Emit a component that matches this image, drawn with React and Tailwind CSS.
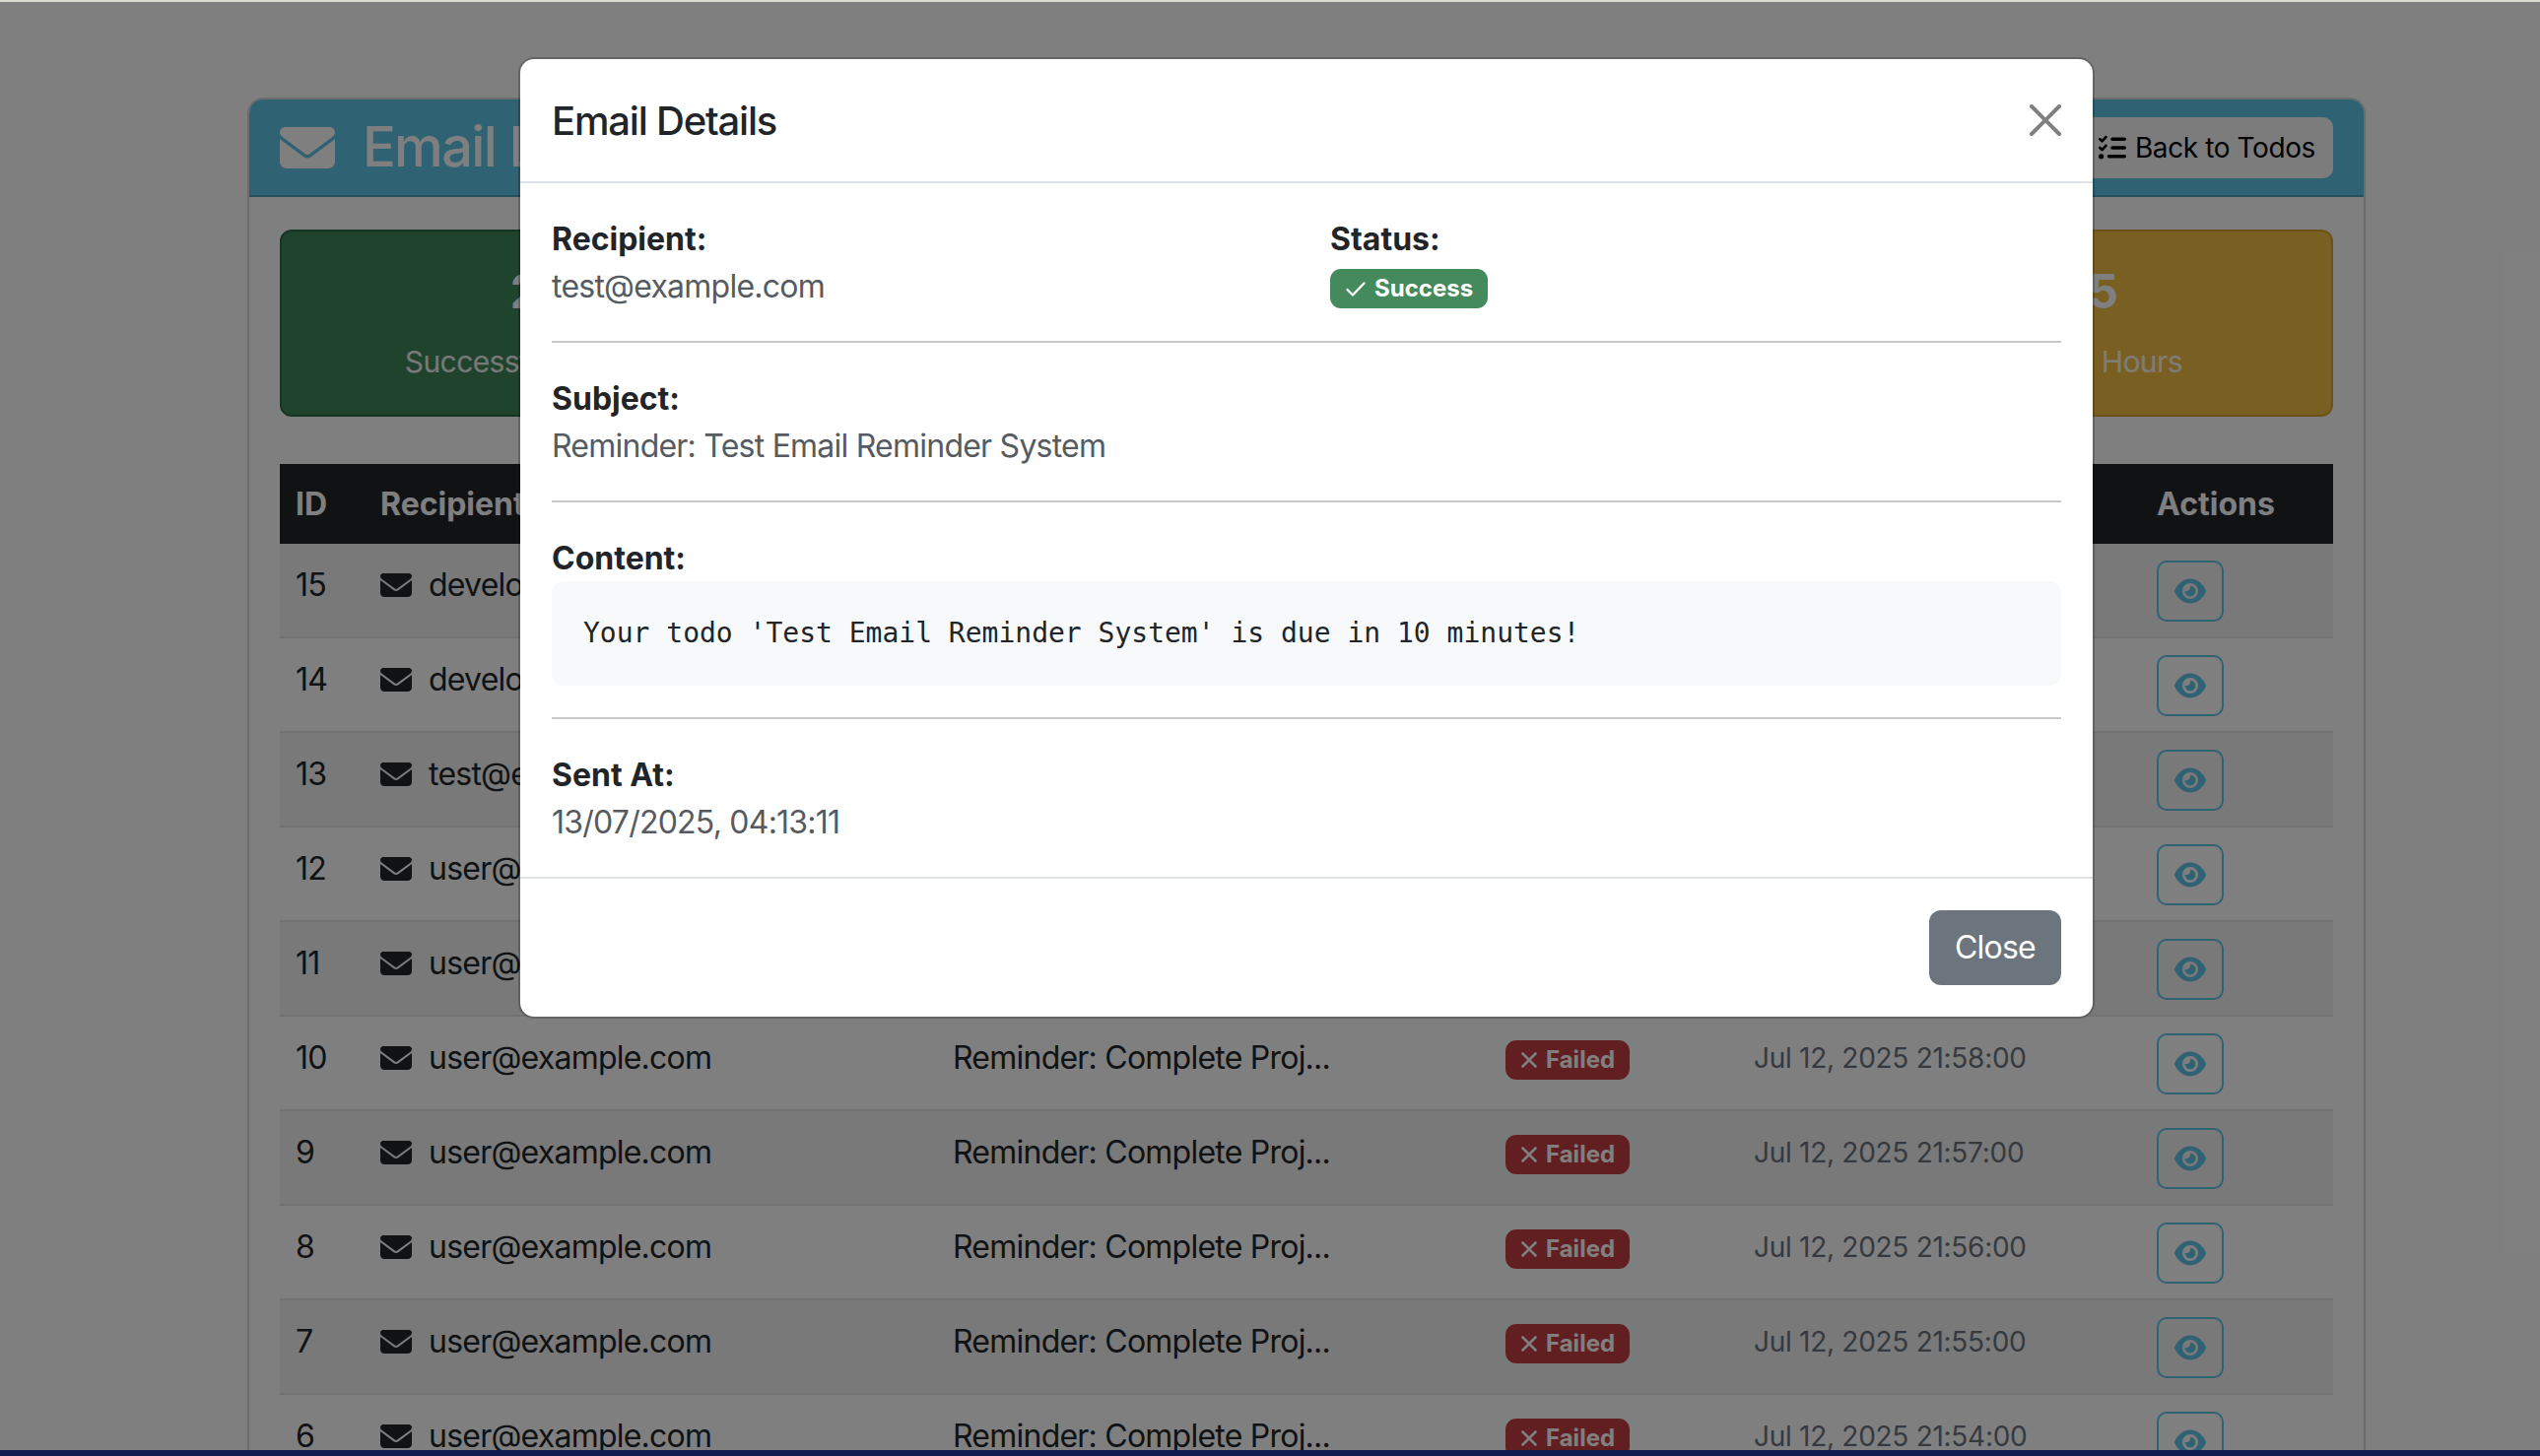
import { FaEnvelope, FaEye, FaListCheck } from "react-icons/fa6";

const rows = [
  { id: 15, to: "developer@example.com", subject: "Reminder: Complete Proj...", ok: true, at: "Jul 13, 2025 04:13:11" },
  { id: 14, to: "developer@example.com", subject: "Reminder: Complete Proj...", ok: true, at: "Jul 13, 2025 04:12:00" },
  { id: 13, to: "test@example.com", subject: "Reminder: Test Email Rem...", ok: true, at: "Jul 13, 2025 04:11:00" },
  { id: 12, to: "user@example.com", subject: "Reminder: Complete Proj...", ok: false, at: "Jul 12, 2025 22:00:00" },
  { id: 11, to: "user@example.com", subject: "Reminder: Complete Proj...", ok: false, at: "Jul 12, 2025 21:59:00" },
  { id: 10, to: "user@example.com", subject: "Reminder: Complete Proj...", ok: false, at: "Jul 12, 2025 21:58:00" },
  { id: 9, to: "user@example.com", subject: "Reminder: Complete Proj...", ok: false, at: "Jul 12, 2025 21:57:00" },
  { id: 8, to: "user@example.com", subject: "Reminder: Complete Proj...", ok: false, at: "Jul 12, 2025 21:56:00" },
  { id: 7, to: "user@example.com", subject: "Reminder: Complete Proj...", ok: false, at: "Jul 12, 2025 21:55:00" },
  { id: 6, to: "user@example.com", subject: "Reminder: Complete Proj...", ok: false, at: "Jul 12, 2025 21:54:00" },
];

const stats = [
  { n: "2", label: "Successfully Sent", color: "bg-[#40865c] border-[#2f6b48]" },
  { n: "10", label: "Failed to Send", color: "bg-[#c43e44] border-[#a83237]" },
  { n: "12", label: "Total Emails", color: "bg-[#5fc6e8] border-[#4aa8c8]" },
  { n: "15", label: "Last 24 Hours", color: "bg-[#f4be44] border-[#d9a534]" },
];

function StatusBadge({ ok }) {
  return (
    <span className={`inline-flex h-10 items-center gap-[9px] rounded-[11px] pl-[16px] pr-[15px] text-[24px] font-bold leading-none tracking-normal text-white ${ok ? "bg-[#458a5c]" : "bg-[#c43e44]"}`}>
      {ok ? (
        <svg viewBox="0 0 20 15" className="h-[15px] w-[20px]" fill="none" stroke="currentColor" strokeWidth="2.4" strokeLinecap="round" strokeLinejoin="round">
          <path d="M1.5 8 7 13.5 18.5 1.5" />
        </svg>
      ) : (
        <svg viewBox="0 0 16 16" className="h-4 w-4" fill="none" stroke="currentColor" strokeWidth="2.6" strokeLinecap="round">
          <path d="M1.5 1.5 14.5 14.5M14.5 1.5 1.5 14.5" />
        </svg>
      )}
      {ok ? "Success" : "Failed"}
    </span>
  );
}

function Detail({ label, children }) {
  return (
    <div>
      <div className="translate-y-px text-[32px] font-bold leading-[48px] tracking-normal text-[#212529]">{label}</div>
      {children}
    </div>
  );
}

function Value({ children }) {
  return <div className="translate-y-px text-[32px] leading-[48px] text-[#565b61]">{children}</div>;
}

function Rule() {
  return <hr className="my-8 border-t-2 border-[#c8c9ca]" />;
}

function EmailModal() {
  return (
    <div className="absolute inset-0 bg-black/50">
      <div className="absolute left-[526px] top-[58px] w-[1600px] rounded-[16px] border-2 border-black/20 bg-white bg-clip-padding">
        <div className="flex h-[126px] items-center justify-between border-b-2 border-[#dee2e6] px-[32px]">
          <h5 className="translate-y-px text-[40px] font-medium leading-[60px] tracking-[-0.03em] text-[#212529]">Email Details</h5>
          <svg viewBox="0 0 16 16" className="h-8 w-8 text-[#808080]" fill="currentColor">
            <path d="M.293.293a1 1 0 0 1 1.414 0L8 6.586 14.293.293a1 1 0 1 1 1.414 1.414L9.414 8l6.293 6.293a1 1 0 0 1-1.414 1.414L8 9.414l-6.293 6.293a1 1 0 0 1-1.414-1.414L6.586 8 .293 1.707a1 1 0 0 1 0-1.414z" />
          </svg>
        </div>
        <div className="p-[32px]">
          <div className="grid grid-cols-2 gap-x-[48px]">
            <Detail label="Recipient:">
              <Value>test@example.com</Value>
            </Detail>
            <Detail label="Status:">
              <div className="h-12 pt-[7px] leading-none">
                <StatusBadge ok />
              </div>
            </Detail>
          </div>
          <Rule />
          <Detail label="Subject:">
            <Value>Reminder: Test Email Reminder System</Value>
          </Detail>
          <Rule />
          <Detail label="Content:">
            <pre className="rounded-[12px] bg-[#f8f9fa] p-[32px] font-['DejaVu_Sans_Mono',monospace] text-[28px] leading-[42px] tracking-normal text-[#212529]">
              Your todo 'Test Email Reminder System' is due in 10 minutes!
            </pre>
          </Detail>
          <Rule />
          <Detail label="Sent At:">
            <Value>13/07/2025, 04:13:11</Value>
          </Detail>
        </div>
        <div className="flex justify-end border-t-2 border-[#dee2e6] p-[32px]">
          <button className="h-[76px] w-[134px] rounded-[12px] bg-[#6c757d] text-[32px] text-white">Close</button>
        </div>
      </div>
    </div>
  );
}

export default function App() {
  return (
    <div className="relative h-[1478px] overflow-hidden bg-white font-['Inter',sans-serif] text-[32px] leading-[48px] tracking-[-0.024em] text-[#212529]">
      <div className="h-[99px]" />
      <div className="mx-[251px] w-[2150px] rounded-[16px] border-2 border-black/15 bg-white">
        <div className="flex items-center justify-between rounded-t-[14px] border-b-2 border-black/20 bg-[#5fc6e8] py-[15px] pl-[31px] pr-[31px] text-white">
          <h3 className="flex items-center gap-[28px] text-[56px] font-medium leading-[67px] tracking-[-0.03em]">
            <FaEnvelope className="h-[56px] w-[56px]" />
            Email Logs Dashboard
          </h3>
          <button className="flex h-[62px] items-center gap-[9px] rounded-[10px] bg-[#f8f9fa] px-[18px] text-[28px] tracking-[-0.014em] text-black">
            <FaListCheck className="h-7 w-7" />
            Back to Todos
          </button>
        </div>
        <div className="px-[31px] pt-[33px]">
          <div className="grid grid-cols-4 gap-[32px]">
            {stats.map((s) => (
              <div key={s.label} className={`flex h-[190px] flex-col items-center rounded-[12px] border-2 pt-[32px] text-white ${s.color}`}>
                <div className="text-[48px] font-bold leading-[58px] tabular-nums">{s.n}</div>
                <div className="mt-[18px] text-[30px] leading-[48px] tracking-[-0.02em] text-white/90">{s.label}</div>
              </div>
            ))}
          </div>
          <table className="mt-[48px] w-[2084px] table-fixed border-collapse">
            <colgroup>
              <col className="w-[86px]" />
              <col className="w-[581px]" />
              <col className="w-[561px]" />
              <col className="w-[252px]" />
              <col className="w-[409px]" />
              <col className="w-[195px]" />
            </colgroup>
            <thead>
              <tr className="h-[81px] bg-[#212529] text-left tracking-normal text-white">
                <th className="px-4 font-bold">ID</th>
                <th className="px-4 font-bold">Recipient</th>
                <th className="px-4 font-bold">Subject</th>
                <th className="px-4 font-bold">Status</th>
                <th className="px-4 font-bold">Sent At</th>
                <th className="px-4 font-bold">Actions</th>
              </tr>
            </thead>
            <tbody>
              {rows.map((r) => (
                <tr key={r.id} className={`border-b-2 border-[#dee2e6] ${r.id % 2 ? "bg-[#f2f2f2]" : "bg-white"}`}>
                  <td className="px-4 pt-[18px] align-top">{r.id}</td>
                  <td className="px-4 pt-[18px] align-top">
                    <span className="flex items-center gap-[17px]">
                      <FaEnvelope className="h-8 w-8 shrink-0" />
                      {r.to}
                    </span>
                  </td>
                  <td className="px-4 pt-[18px] align-top">{r.subject}</td>
                  <td className="px-4 pt-[24px] align-top leading-none">
                    <StatusBadge ok={r.ok} />
                  </td>
                  <td className="px-4 pt-[21px] align-top text-[28px] leading-[42px] tracking-[-0.01em] text-[#6c757d]">{r.at}</td>
                  <td className="px-4 pb-[15px] pt-[17px] align-top leading-none">
                    <button className="flex h-[62px] w-[68px] items-center justify-center rounded-[10px] border-2 border-[#5fc6e8] text-[#5fc6e8]">
                      <FaEye className="h-8 w-8" />
                    </button>
                  </td>
                </tr>
              ))}
            </tbody>
          </table>
        </div>
      </div>
      <EmailModal />
      <div className="absolute inset-x-0 top-0 h-[2px] bg-[#dddcd0]" />
      <div className="absolute inset-x-0 bottom-0 h-[6px] bg-[#0d1b4f]" />
    </div>
  );
}
